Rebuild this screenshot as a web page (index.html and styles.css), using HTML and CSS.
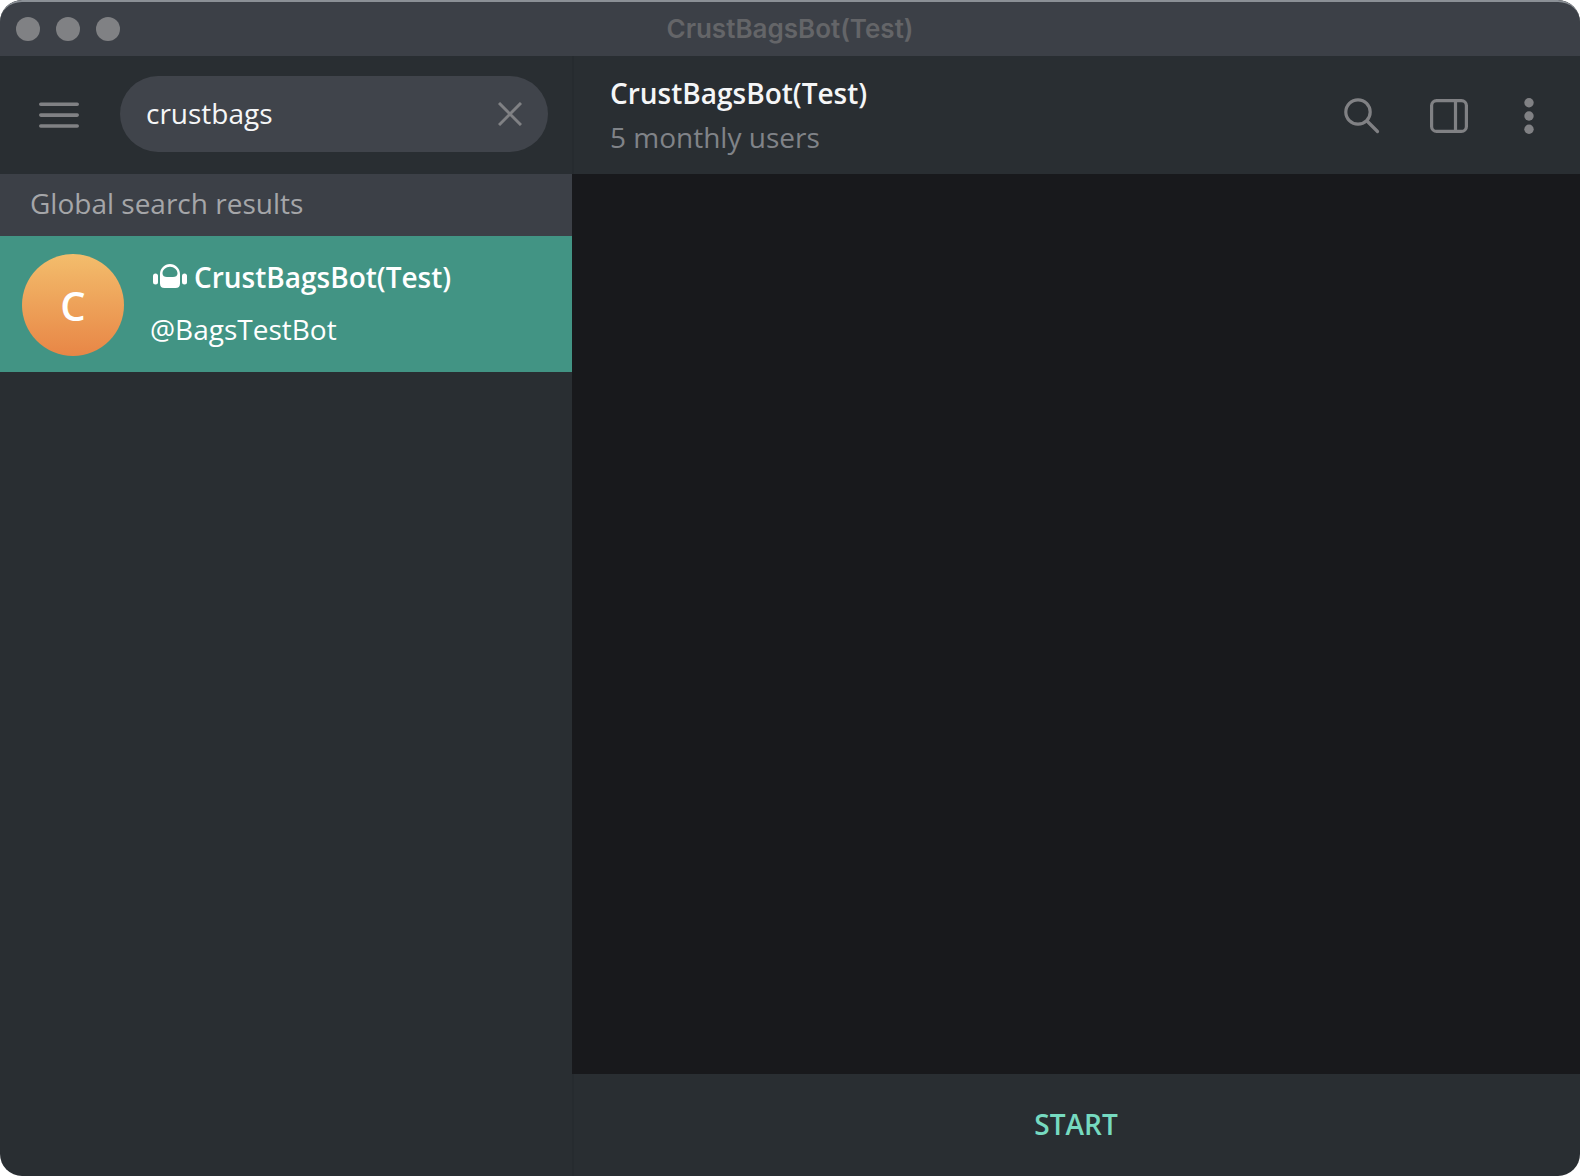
FILE: index.html
```html
<!DOCTYPE html>
<html lang="en">
<head>
<meta charset="utf-8">
<meta name="viewport" content="width=device-width, initial-scale=1">
<title>CrustBagsBot(Test)</title>
<link rel="stylesheet" href="styles.css">
</head>
<body>
<div class="window">
  <header class="titlebar">
    <div class="lights">
      <button class="light" type="button" aria-label="Close"></button>
      <button class="light" type="button" aria-label="Minimize"></button>
      <button class="light" type="button" aria-label="Zoom"></button>
    </div>
    <div class="window-title">CrustBagsBot(Test)</div>
  </header>
  <div class="panes">
    <aside class="sidebar">
      <div class="search-bar">
        <button class="icon-button" type="button" aria-label="Menu">
          <svg width="40" height="30" viewBox="0 0 40 30" fill="none" stroke="currentColor" stroke-width="3.6" stroke-linecap="round"><path d="M1.800 5.200H38.200M1.800 16.100H38.200M1.800 27H38.200"/></svg>
        </button>
        <form class="search">
          <input class="search-input" type="text" value="crustbags" aria-label="Search">
          <button class="icon-button" type="reset" aria-label="Clear search">
            <svg width="24" height="24" viewBox="0 0 24 24" fill="none" stroke="currentColor" stroke-width="3"><path d="M1 1L23 23M23 1L1 23"/></svg>
          </button>
        </form>
      </div>
      <h2 class="section-title">Global search results</h2>
      <a class="result" href="#bot">
        <span class="avatar">C</span>
        <span class="result-text">
          <span class="result-name">
            <svg class="bot-icon" width="34" height="26" viewBox="0 0 34 26" fill="currentColor"><rect x="0" y="9.500" width="5" height="11" rx="2.500"/><rect x="29" y="9.500" width="5" height="11" rx="2.500"/><path fill-rule="evenodd" d="M17 0C22.500 0 27 4.500 27 10V19.500Q27 24 22.500 24H11.500Q7 24 7 19.500V10C7 4.500 11.500 0 17 0ZM17 2.800C13 2.800 9.500 5.800 9.500 9.500C9.500 12 11.500 13 14 13H20C22.500 13 24.500 12 24.500 9.500C24.500 5.800 21 2.800 17 2.800Z"/></svg>
            CrustBagsBot(Test)
          </span>
          <span class="result-handle">@BagsTestBot</span>
        </span>
      </a>
    </aside>
    <main class="chat">
      <header class="chat-header">
        <div class="chat-info">
          <h1 class="chat-name">CrustBagsBot(Test)</h1>
          <p class="chat-status">5 monthly users</p>
        </div>
        <div class="actions">
          <button class="icon-button" type="button" aria-label="Search messages">
            <svg width="36" height="36" viewBox="0 0 36 36" fill="none" stroke="currentColor" stroke-width="3.200" stroke-linecap="round"><circle cx="14" cy="14" r="12.200"/><path d="M23 23L33.500 33.500"/></svg>
          </button>
          <button class="icon-button" type="button" aria-label="Toggle side panel">
            <svg width="38" height="34" viewBox="0 0 38 34" fill="none" stroke="currentColor" stroke-width="3.200"><rect x="1.600" y="1.600" width="34.800" height="30.800" rx="5"/><path d="M25.500 2V32"/></svg>
          </button>
          <button class="icon-button" type="button" aria-label="More">
            <svg width="10" height="36" viewBox="0 0 10 36" fill="currentColor"><circle cx="5" cy="4.800" r="4.700"/><circle cx="5" cy="18" r="4.700"/><circle cx="5" cy="31.200" r="4.700"/></svg>
          </button>
        </div>
      </header>
      <section class="messages" aria-label="Messages"></section>
      <button class="start" type="button">START</button>
    </main>
  </div>
</div>
</body>
</html>
```
FILE: styles.css
```css
* {
  box-sizing: border-box;
}

body {
  margin: 0;
  background: #fff;
  font: 400 28px/38px "Open Sans", "Noto Sans", sans-serif;
  color: #f5f6f7;
}

button,
input {
  margin: 0;
  padding: 0;
  border: 0;
  background: none;
  color: inherit;
  font: inherit;
}

h1,
h2,
p {
  margin: 0;
  font-size: inherit;
  font-weight: 400;
}

svg {
  display: block;
  flex: none;
}

.window {
  display: flex;
  flex-direction: column;
  min-height: 100vh;
  overflow: hidden;
  border-radius: 22px;
  background: #292e32;
}

.titlebar {
  display: grid;
  grid-template-columns: 1fr auto 1fr;
  align-items: center;
  height: 56px;
  padding: 0 16px;
  border-top: 2px solid #8b9096;
  border-radius: 22px 22px 0 0;
  background: #3c4047;
}

.lights {
  display: flex;
  gap: 16px;
}

.light {
  width: 24px;
  height: 24px;
  border-radius: 50%;
  background: #808184;
}

.window-title {
  color: #646568;
  font: 600 26px/32px Inter, "Liberation Sans", sans-serif;
}

.panes {
  display: flex;
  flex: 1;
}

.sidebar {
  flex: none;
  width: 572px;
}

.search-bar {
  display: flex;
  align-items: center;
  gap: 41px;
  height: 118px;
  padding: 0 24px 2px 39px;
}

.icon-button {
  display: flex;
  color: #808184;
  cursor: pointer;
}

.search {
  display: flex;
  flex: 1;
  align-items: center;
  min-width: 0;
  height: 76px;
  padding: 0 26px;
  border-radius: 38px;
  background: #40444b;
}

.search-input {
  flex: 1;
  min-width: 0;
  padding-bottom: 2px;
  outline: 0;
}

.section-title {
  padding: 10px 30px 14px;
  background: #3c4047;
  color: #a5a6a9;
}

.result {
  display: flex;
  align-items: center;
  gap: 26px;
  height: 136px;
  padding: 2px 22px 0;
  background: #429484;
  color: #fff;
  text-decoration: none;
}

.avatar {
  display: flex;
  flex: none;
  align-items: center;
  justify-content: center;
  width: 102px;
  height: 102px;
  padding-top: 2px;
  border-radius: 50%;
  background: linear-gradient(#f3bd6c, #e88646);
  font-size: 40px;
  font-weight: 600;
}

.result-text {
  display: grid;
  gap: 14px;
  padding-bottom: 4px;
}

.result-name {
  display: flex;
  align-items: center;
  gap: 7px;
  padding-left: 3px;
  font-weight: 600;
}

.chat {
  display: flex;
  flex: 1;
  flex-direction: column;
  min-width: 0;
}

.chat-header {
  display: flex;
  align-items: center;
  justify-content: space-between;
  height: 118px;
  padding: 0 42px 0 36px;
  border-left: 2px solid #262b2f;
}

.chat-info {
  display: grid;
  gap: 6px;
}

.chat-name {
  font-weight: 600;
}

.chat-status {
  color: #808388;
}

.actions {
  display: flex;
  align-items: center;
  gap: 50px;
  padding-top: 2px;
}

.actions .icon-button:last-child {
  padding: 0 4px 0 6px;
}

.messages {
  flex: 1;
  background: #18191c;
}

.start {
  height: 102px;
  padding: 0 2px 3px 0;
  border-left: 2px solid #262b2f;
  color: #76dac0;
  font-weight: 600;
  cursor: pointer;
}
```
